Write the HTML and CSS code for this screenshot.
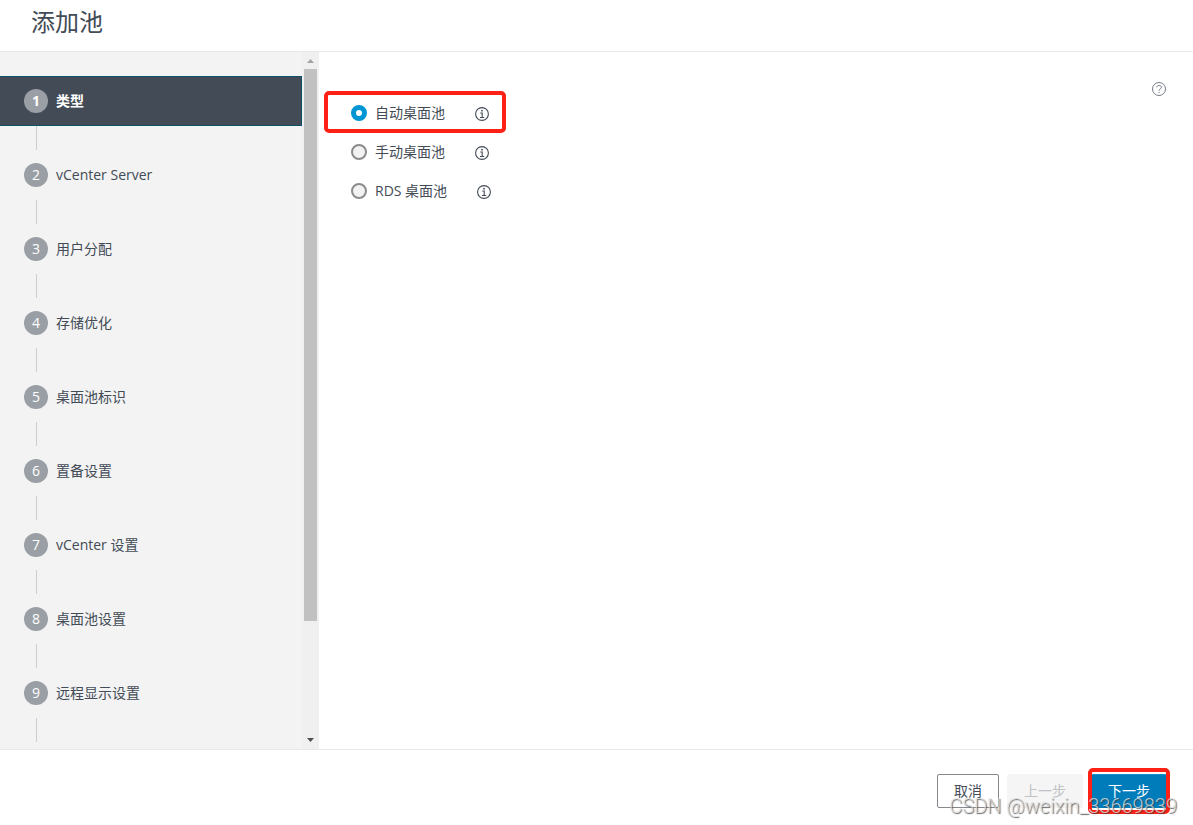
FILE: index.html
```
<!DOCTYPE html>
<html lang="zh-CN">
<head>
	<meta charset="UTF-8">
	<meta name="viewport" content="width=device-width, initial-scale=1.0">
	<title>添加池</title>
	<link rel="stylesheet" href="styles.css">
</head>
<body>

	<svg class="sprite" aria-hidden="true">
		<symbol id="info" viewBox="0 0 14 14">
			<circle cx="7" cy="7" r="6.4" fill="none" stroke="currentColor" stroke-width="1.1"/>
			<circle cx="7" cy="3.7" r="0.9" fill="currentColor"/>
			<path d="M5.3 6H7.2V10.3M5 10.5H9.2" fill="none" stroke="currentColor" stroke-width="1.1"/>
		</symbol>
	</svg>

	<header class="header">
		<h1>添加池</h1>
	</header>

	<main class="main">
		<nav class="sidebar">
			<ol class="steps">
				<li><button type="button" class="step active" aria-current="step"><span class="num">1</span>类型</button></li>
				<li><button type="button" class="step"><span class="num">2</span>vCenter Server</button></li>
				<li><button type="button" class="step"><span class="num">3</span>用户分配</button></li>
				<li><button type="button" class="step"><span class="num">4</span>存储优化</button></li>
				<li><button type="button" class="step"><span class="num">5</span>桌面池标识</button></li>
				<li><button type="button" class="step"><span class="num">6</span>置备设置</button></li>
				<li><button type="button" class="step"><span class="num">7</span>vCenter 设置</button></li>
				<li><button type="button" class="step"><span class="num">8</span>桌面池设置</button></li>
				<li><button type="button" class="step"><span class="num">9</span>远程显示设置</button></li>
			</ol>
			<div class="scrollbar" aria-hidden="true">
				<svg class="arrow up" viewBox="0 0 17 17"><path d="M5 11L8.5 7L12 11Z"/></svg>
				<div class="track"><div class="thumb"></div></div>
				<svg class="arrow down" viewBox="0 0 17 17"><path d="M5 6L8.5 10L12 6Z"/></svg>
			</div>
		</nav>

		<section class="content">
			<form class="options">
				<div class="option marked">
					<input type="radio" name="poolType" id="autoPool" checked>
					<label for="autoPool">自动桌面池</label>
					<button type="button" class="icon" aria-label="自动桌面池信息"><svg><use href="#info"/></svg></button>
				</div>
				<div class="option">
					<input type="radio" name="poolType" id="manualPool">
					<label for="manualPool">手动桌面池</label>
					<button type="button" class="icon" aria-label="手动桌面池信息"><svg><use href="#info"/></svg></button>
				</div>
				<div class="option">
					<input type="radio" name="poolType" id="rdsPool">
					<label for="rdsPool">RDS 桌面池</label>
					<button type="button" class="icon" aria-label="RDS 桌面池信息"><svg><use href="#info"/></svg></button>
				</div>
			</form>
			<button type="button" class="icon help" aria-label="帮助">
				<svg viewBox="0 0 14 14">
					<circle cx="7" cy="7" r="6.5" fill="none" stroke="currentColor"/>
					<path d="M4.7 5.3C4.8 2.8 9.4 2.8 9.4 5.3C9.4 6.8 7.1 6.9 7.1 8.7M7.1 9.9V11" fill="none" stroke="currentColor"/>
				</svg>
			</button>
		</section>
	</main>

	<footer class="footer">
		<button type="button" class="btn cancel">取消</button>
		<button type="button" class="btn prev" disabled>上一步</button>
		<div class="next-wrap">
			<button type="button" class="btn next">下一步</button>
		</div>
		<span class="watermark">CSDN @weixin_33669839</span>
	</footer>

</body>
</html>
```

FILE: styles.css
```
* {
	box-sizing: border-box;
}
body {
	margin: 0;
	min-height: 100vh;
	display: flex;
	flex-direction: column;
	background: #fff;
	color: #424b56;
	font-family: "Open Sans", "Noto Sans CJK SC", sans-serif;
	font-size: 14px;
	line-height: 24px;
}
button {
	font: inherit;
	color: inherit;
	cursor: pointer;
}
.sprite {
	position: absolute;
	width: 0;
	height: 0;
}
.header {
	padding: 4px 31px 11px;
	border-bottom: 1px solid #e8e8e8;
}
.header h1 {
	margin: 0;
	font-size: 24px;
	font-weight: normal;
	line-height: 36px;
}
.main {
	flex: 1;
	display: flex;
}
.sidebar {
	flex: 0 0 319px;
	display: flex;
	background: #f3f3f3;
}
.steps {
	flex: 1;
	margin: 0;
	padding: 24px 0 0;
	list-style: none;
}
.steps li::after {
	content: "";
	display: block;
	width: 1px;
	height: 24px;
	margin-left: 36px;
	background: #cccfd2;
}
.step {
	display: flex;
	align-items: center;
	gap: 8px;
	width: 100%;
	height: 50px;
	padding: 0 23px;
	border: 1px solid transparent;
	background: none;
	text-align: left;
}
.step.active {
	background: #424b56;
	border-color: #0b5168;
	border-left-color: #424b56;
	color: #fff;
	font-weight: bold;
}
.num {
	width: 24px;
	height: 24px;
	border-radius: 50%;
	background: #9a9fa6;
	color: #fff;
	text-align: center;
}
.scrollbar {
	width: 17px;
	display: flex;
	flex-direction: column;
	background: #f0f0f0;
}
.arrow {
	width: 17px;
	height: 17px;
}
.up {
	fill: #a3a3a3;
}
.down {
	fill: #505050;
}
.track {
	flex: 1;
	padding: 0 2px;
}
.thumb {
	height: 83.3%;
	background: #c1c1c1;
}
.content {
	flex: 1;
	display: flex;
	justify-content: space-between;
	align-items: flex-start;
	padding: 30px 27px 24px 32px;
}
.options {
	display: flex;
	flex-direction: column;
	gap: 15px;
	padding-top: 19px;
}
.option {
	position: relative;
	display: flex;
	align-items: center;
}
/* highlight frame around the selected option */
.marked::before {
	content: "";
	position: absolute;
	inset: -10px -15px -8px -27px;
	border: 4px solid #ff2116;
	border-radius: 5px;
	pointer-events: none;
}
.option input {
	appearance: none;
	width: 16px;
	height: 16px;
	margin: 0 8px 0 0;
	border: 2px solid #8c8c8c;
	border-radius: 50%;
	background: #f2f2f2;
}
.option input:checked {
	border: 5px solid #0095d3;
	background: #fff;
}
.option label {
	margin-right: 30px;
}
.icon {
	padding: 0;
	border: none;
	background: none;
	line-height: 0;
}
.icon svg {
	width: 14px;
	height: 14px;
}
.option .icon {
	padding-top: 2px;
}
.help {
	color: #737b85;
}
.footer {
	position: relative;
	display: flex;
	justify-content: flex-end;
	gap: 8px;
	padding: 24px 26px 17px;
	border-top: 1px solid #e8e8e8;
}
.btn {
	height: 34px;
	padding: 0 16px;
	border: 1px solid #85888c;
	border-radius: 2px;
	background: #fff;
}
.btn.prev {
	border-color: #f5f5f5;
	background: #f5f5f5;
	color: #bfc2c6;
}
.btn.next {
	border-color: #007cbb;
	border-top-color: #1593c9;
	background: #007cbb;
	color: #fff;
}
.next-wrap {
	position: relative;
}
.next-wrap::before {
	content: "";
	position: absolute;
	inset: -6px -3px;
	border: 4px solid #ff2116;
	border-radius: 5px;
	pointer-events: none;
}
.watermark {
	position: absolute;
	right: 16px;
	bottom: 7px;
	color: rgba(225, 225, 225, 0.8);
	font-family: Roboto, "Liberation Sans", sans-serif;
	font-size: 20px;
	font-weight: 300;
	text-shadow: 1px 1px 1px rgba(60, 60, 60, 0.8);
	pointer-events: none;
}
```
